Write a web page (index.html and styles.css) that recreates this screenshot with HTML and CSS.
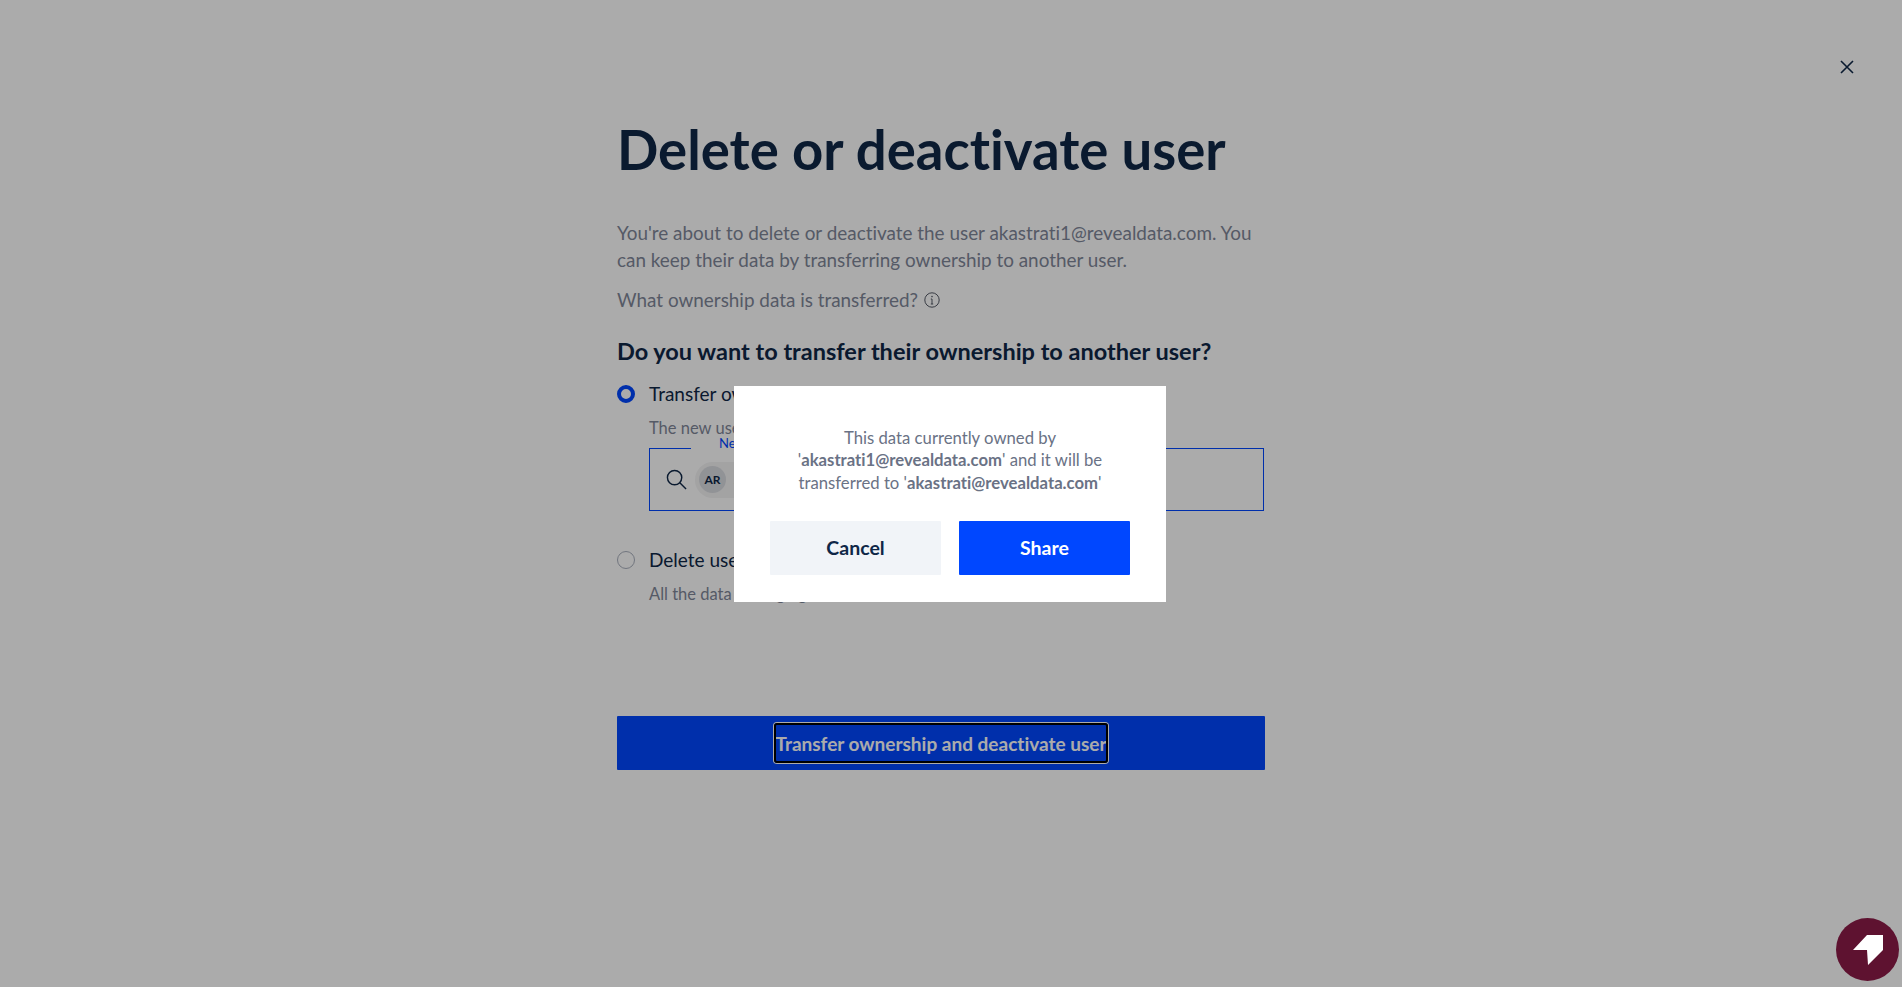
FILE: index.html
```html
<!DOCTYPE html>
<html lang="en">
<head>
    <meta charset="UTF-8">
    <title>Delete or deactivate user</title>
    <link rel="stylesheet" href="styles.css">
</head>
<body>
    <div class="top-bar">
        <button class="close-btn" aria-label="Close">
            <svg width="14" height="14" viewBox="0 0 14 14"><path d="M1 1l12 12M13 1L1 13" fill="none" stroke="#0f2747" stroke-width="1.6"/></svg>
        </button>
    </div>

    <main class="container">
        <h1>Delete or deactivate user</h1>
        <p class="intro">You're about to delete or deactivate the user akastrati1@revealdata.com. You can keep their data by transferring ownership to another user.</p>
        <p class="what">What ownership data is transferred?
            <svg class="info-icon" width="16" height="16" viewBox="0 0 16 16"><circle cx="8" cy="8" r="7.2" fill="none" stroke="#555a66" stroke-width="1"/><path d="M8 7v5M6.8 12h2.4M6.8 7H8" fill="none" stroke="#555a66" stroke-width="1"/><circle cx="8" cy="4.6" r=".8" fill="#555a66"/></svg>
        </p>
        <h2>Do you want to transfer their ownership to another user?</h2>

        <div class="option">
            <span class="radio checked"></span>
            <span class="option-title">Transfer ownership to another user</span>
        </div>
        <p class="option-note">The new user will own all of the transferred data</p>
        <div class="owner-field">
            <span class="owner-label">New owner</span>
            <svg width="21" height="21" viewBox="0 0 22 22"><circle cx="9" cy="9" r="7.5" fill="none" stroke="#0f2747" stroke-width="1.5"/><path d="M14.5 14.5L21 21" stroke="#0f2747" stroke-width="1.5"/></svg>
            <span class="chip"><span class="avatar">AR</span>akastrati@revealdata.com</span>
        </div>

        <div class="option option-delete">
            <span class="radio"></span>
            <span class="option-title">Delete user and their data</span>
        </div>
        <p class="option-note option-note-delete">All the data belonging to this user will be deleted</p>

        <div class="submit-bar">
            <button class="submit-btn">Transfer ownership and deactivate user</button>
        </div>
    </main>

    <div class="overlay">
        <div class="modal">
            <p>This data currently owned by<br>'<b>akastrati1@revealdata.com</b>' and it will be<br>transferred to '<b>akastrati@revealdata.com</b>'</p>
            <div class="modal-actions">
                <button class="btn btn-cancel">Cancel</button>
                <button class="btn btn-share">Share</button>
            </div>
        </div>
    </div>

    <button class="chat-btn" aria-label="Chat">
        <svg width="30" height="30" viewBox="0 0 30 30"><path d="M0 15L14 0H30V15L15 30L14 15Z" fill="#fff"/></svg>
    </button>
</body>
</html>
```

FILE: styles.css
```css
* {
    margin: 0;
    padding: 0;
    box-sizing: border-box;
}

body {
    font-family: 'Lato', sans-serif;
    font-variant-ligatures: none;
    background: #fff;
    height: 987px;
    overflow: hidden;
    color: #0f2747;
}

button {
    font-family: inherit;
    font-variant-ligatures: none;
    border: none;
    cursor: pointer;
}

.top-bar {
    display: flex;
    justify-content: flex-end;
    height: 110px;
    padding: 60px 48px 0 0;
}

.close-btn {
    width: 14px;
    height: 14px;
    background: none;
    display: flex;
}

.container {
    width: 648px;
    margin-left: 617px;
}

h1 {
    font-size: 54.5px;
    font-weight: 700;
    line-height: 78px;
    margin-bottom: 31px;
    color: #0f2747;
}

.intro {
    font-size: 18.9px;
    line-height: 27px;
    color: #7f8799;
}

.what {
    font-size: 18.9px;
    line-height: 27px;
    color: #7f8799;
    margin-top: 13px;
    display: flex;
    align-items: center;
    gap: 6px;
}

h2 {
    font-size: 23.5px;
    font-weight: 700;
    line-height: 32px;
    margin-top: 22px;
    color: #0f2747;
}

.option {
    display: flex;
    align-items: center;
    gap: 14px;
    height: 27px;
    margin-top: 13px;
}

.option-delete {
    margin-top: 35px;
}

.radio {
    width: 18px;
    height: 18px;
    border-radius: 50%;
    border: 1px solid #aab0bd;
}

.radio.checked {
    border: 4px solid #0047ff;
}

.option-title {
    font-size: 19px;
    color: #0f2747;
}

.option-note {
    font-size: 16.5px;
    line-height: 24px;
    color: #7f8799;
    margin: 9px 0 0 32px;
}

.owner-field {
    position: relative;
    display: flex;
    align-items: center;
    gap: 8px;
    height: 63px;
    margin: 8px 1px 0 32px;
    padding-left: 16px;
    border: 1px solid #0047ff;
}

.owner-label {
    position: absolute;
    top: -14px;
    left: 41px;
    padding: 0 8px 0 28px;
    background: #fff;
    font-size: 13px;
    line-height: 16px;
    color: #0047ff;
}

.chip {
    display: flex;
    align-items: center;
    gap: 8px;
    height: 36px;
    padding: 0 14px 0 4px;
    border-radius: 18px;
    background: #f3f3f4;
    font-size: 14px;
}

.avatar {
    width: 27px;
    height: 27px;
    border-radius: 50%;
    background: #d9dbe0;
    display: flex;
    align-items: center;
    justify-content: center;
    font-size: 12px;
    font-weight: 700;
}

.submit-bar {
    display: flex;
    justify-content: center;
    align-items: center;
    height: 54px;
    margin-top: 110px;
    background: #0047ff;
    border-radius: 1px;
}

.submit-btn {
    height: 40px;
    padding: 0 1px;
    background: none;
    color: #fff;
    font-size: 19px;
    font-weight: 700;
    border-radius: 3px;
    outline: 2px solid #000;
    outline-offset: -2px;
    box-shadow: 0 0 0 1px #fff;
}

.overlay {
    position: fixed;
    inset: 0;
    padding-right: 2px;
    background: rgba(0, 0, 0, 0.33);
    display: flex;
    align-items: center;
    justify-content: center;
}

.modal {
    width: 432px;
    height: 216px;
    padding: 41px 36px 0;
    background: #fff;
    text-align: center;
}

.modal p {
    font-size: 16.7px;
    line-height: 22.5px;
    color: #6a7285;
}

.modal-actions {
    display: flex;
    gap: 18px;
    margin-top: 26.5px;
}

.btn {
    flex: 1;
    height: 54px;
    font-size: 19.5px;
    font-weight: 700;
    border-radius: 1px;
}

.btn-cancel {
    background: #f1f4f8;
    color: #0f2747;
}

.btn-share {
    background: #0047ff;
    color: #fff;
}

.chat-btn {
    position: fixed;
    right: 3px;
    bottom: 6px;
    width: 63px;
    height: 63px;
    border-radius: 50%;
    background: #5e1230;
    display: flex;
    align-items: center;
    justify-content: center;
}
```
